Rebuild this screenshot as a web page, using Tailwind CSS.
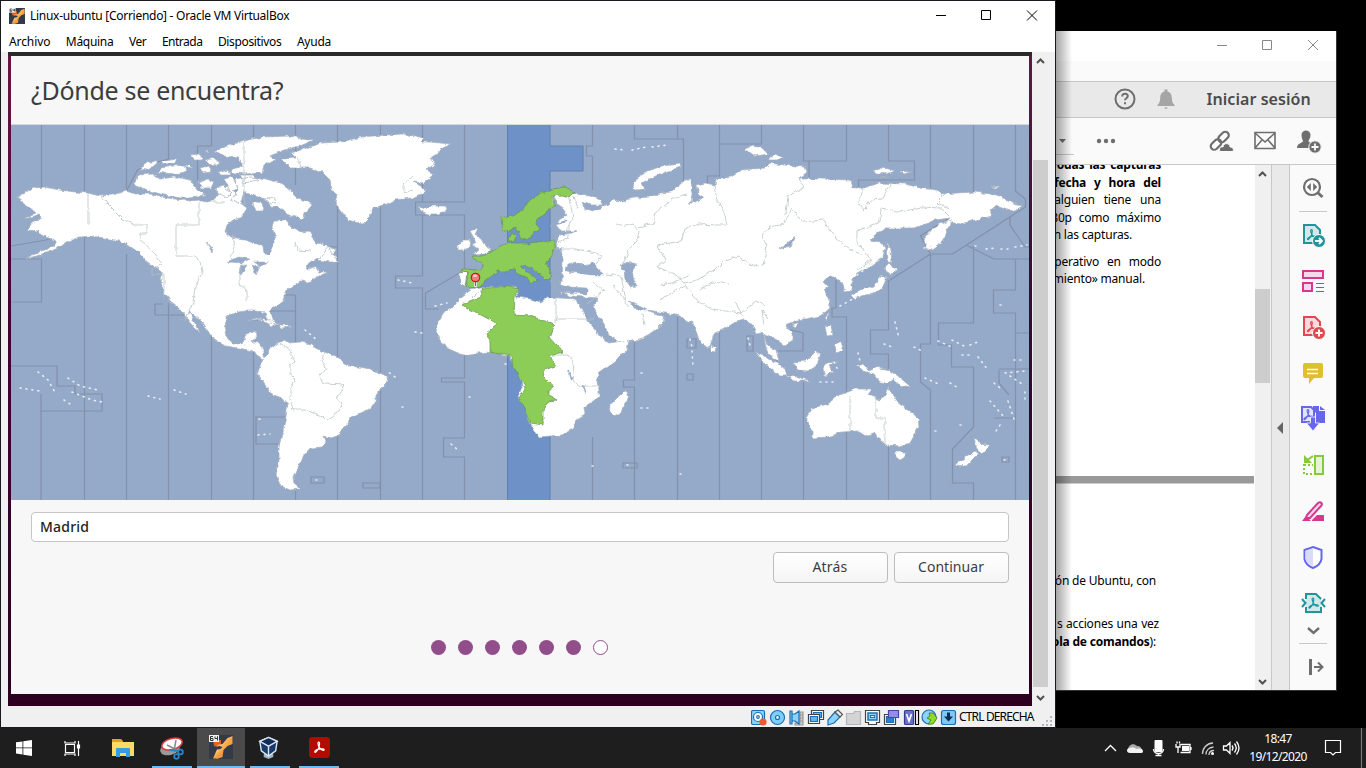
<!DOCTYPE html>
<html lang="es">
<head>
<meta charset="utf-8">
<title>Linux-ubuntu</title>
<script src="https://cdn.jsdelivr.net/npm/@tailwindcss/browser@4"></script>
</head>
<body class="relative h-[768px] w-[1366px] overflow-hidden bg-black font-['Noto_Sans',sans-serif] text-[12px] text-black">
<svg width="0" height="0" class="absolute">
  <defs>
    <g id="pdf" fill="none" stroke-width="1.2" stroke-linecap="round"><path d="M10 6c-1.500 0-.7 3 .2 4.700 1.300 2.500 4 4.200 5 3.300.9-1.200-2.500-1.800-5.200-1.100-2 .5-4.700 1.800-4 3 .8 1 3-2 4-4.400C10.800 9 11.200 6 10 6z"/></g>
    <linearGradient id="g64" x1="0" y1="0" x2="1" y2="1"><stop offset="0" stop-color="#fff0b0"/><stop offset=".5" stop-color="#f9a94a"/><stop offset="1" stop-color="#e8702a"/></linearGradient>
    <symbol id="vm" viewBox="0 0 24 24"><path fill="#333a48" d="M0 0h24v24H0z"/><path fill="#e8601c" d="M4 5h8v4l-3 3-4-1z"/><path fill="url(#g64)" d="M23.500 1v8l-5 2-4 4-1 7-6 2 2-8 4-4-6-2 6-1 5-6z"/><path fill="url(#g64)" d="M14 14l-1 6-5 3.500H4l4-9z"/><path fill="#eee" d="M0 0h10v7H0z"/><path d="M4 1.500H1.500v4h2.500v-2H1.500M6 1.500v2h2.500v-2 4" fill="none" stroke="#333" stroke-width="1"/></symbol>
  </defs>
</svg>

<!-- PDF reader window -->
<div class="absolute left-[1056px] top-[31px] flex h-[660px] w-[281px] flex-col overflow-hidden border-r border-b border-[#333] bg-white">
  <div class="flex h-[30px] shrink-0 items-center justify-end">
    <svg class="h-[30px] w-[140px]" viewBox="1196 31 140 30" fill="none" stroke="#888"><path d="M1217 45.500h10M1262.500 40.500h9v9h-9zM1308 40l10 10M1318 40l-10 10"/></svg>
  </div>
  <div class="h-[20px] shrink-0 bg-[#fafafa]"></div>
  <div class="flex h-[37px] shrink-0 items-center border-y border-[#c8c8c8] bg-[#e9e9e9] pb-[2px] pl-[57px]">
    <svg class="-ml-[.5px] size-6" viewBox="0 0 24 24" fill="none" stroke="#6e6e6e" stroke-width="2"><circle cx="12" cy="12" r="9.500"/><path d="M9.200 9.500c0-4 5.600-3.500 5.600-.4 0 2-2.800 2.200-2.800 4.200M12 15.300v2"/></svg>
    <svg class="ml-[17px] size-6" viewBox="0 0 24 24" fill="#a5a5a5"><path d="M10.500 2.500h3v2c3 .8 4.300 3 4.300 6 0 4 1 6 2.700 7.500v1h-17v-1c1.700-1.500 2.700-3.500 2.700-7.500 0-3 1.300-5.200 4.300-6zM10 20.500h4l-2 1.800z"/></svg>
    <span class="ml-[29px] whitespace-nowrap text-[16px] font-semibold tracking-[0.06px] text-[#4b4b4b]">Iniciar sesión</span>
  </div>
  <div class="h-[47px] shrink-0 border-b border-[#c8c8c8] bg-[#fafafa]">
    <svg class="h-[46px] w-[280px]" viewBox="1056 118 280 46" fill="#6e6e6e"><path d="M1059 139h7l-3.500 4z"/><path fill="#c8c8c8" d="M1056 154h18v1h-18z"/><circle cx="1099" cy="141" r="2.200"/><circle cx="1106" cy="141" r="2.200"/><circle cx="1113" cy="141" r="2.200"/>
    <g fill="none" stroke="#6e6e6e" stroke-width="2.200"><rect x="-6" y="-3.500" width="12" height="7" rx="3.500" transform="translate(1223.500 137) rotate(-45)"/><rect x="-6" y="-3.500" width="12" height="7" rx="3.500" transform="translate(1216 144.500) rotate(-45)"/></g>
    <path stroke="#fafafa" d="M1220 151.500c-1.500-4 1-5 3-4.500 1-5 7-4 7 0 3 0 4 2.500 3 4.500z"/>
    <path fill="none" stroke="#6e6e6e" stroke-width="1.600" d="M1255 132.500h20v16h-20zM1255 133l10 9 10-9M1255 148l7-8M1275 148l-7-8"/>
    <path d="M1301.500 135c0-6 9-6 9 0 0 3-1.500 4-2 6 0 2 6 2 6 7h-17.500c0-5 6-5 6-7-.500-2-1.500-3-1.500-6z"/><circle cx="1315" cy="147" r="6.200" stroke="#fafafa"/><path stroke="#fafafa" stroke-width="1.800" d="M1311.500 147h7M1315 143.500v7"/></svg>
  </div>
  <div class="flex min-h-0 grow">
    <div class="relative flex w-[199px] shrink-0 flex-col overflow-hidden bg-white">
      <div class="-mt-[9px] flex w-[105px] flex-col items-end whitespace-nowrap leading-[17.500px] tracking-[-0.2px]">
        <b class="[word-spacing:2px]">odas las capturas</b>
        <b class="[word-spacing:5px]">fecha y hora del</b>
        <span class="[word-spacing:6px]">alguien tiene una</span>
        <span class="[word-spacing:4px]">80p como máximo</span>
        <span class="mr-[29px]">n las capturas.</span>
        <span class="mt-[9px] [word-spacing:5px]">perativo en modo</span>
        <span class="mr-[16px]">miento» manual.</span>
      </div>
      <div class="mt-[188px] mr-px h-[8px] shrink-0 border-b border-[#ccc] bg-[#999]"></div>
      <div class="mt-[88px] flex w-[105px] flex-col items-end whitespace-nowrap leading-[17.500px] tracking-[-0.2px]">
        <span class="mr-[5px]">ón de Ubuntu, con</span>
        <span class="mt-[26px] mr-[2px] [word-spacing:.7px]">s acciones una vez</span>
        <span class="mr-[5px]"><b>ola de comandos</b>):</span>
      </div>
    </div>
    <div class="flex w-[17px] shrink-0 flex-col items-center border-r border-[#c8c8c8] bg-[#f0f0f0]">
      <svg class="h-[18px] w-4 shrink-0" viewBox="0 0 16 18" fill="none" stroke="#505050" stroke-width="2"><path d="M4 11l3.500-3.500 3.500 3.500"/></svg>
      <div class="mt-[106px] mr-px h-[94px] w-[15px] bg-[#cdcdcd]"></div>
      <svg class="mt-auto h-[18px] w-4 shrink-0" viewBox="0 0 16 18" fill="none" stroke="#505050" stroke-width="2"><path d="M4 8l3.500 3.500L11 8"/></svg>
    </div>
    <div class="flex w-[18px] shrink-0 items-center border-r border-[#c8c8c8] bg-[#e9e9e9]"><svg class="ml-1 h-3 w-2" viewBox="0 0 8 12" fill="#666"><path d="M7 0v12L1 6z"/></svg></div>
    <svg class="h-[525px] w-[46px] shrink-0 bg-[#fafafa]" viewBox="1290 165 46 525" fill="none">
      <g stroke="#6e6e6e" stroke-width="2.200"><circle cx="1312" cy="187" r="8"/><path stroke-width="3" d="M1317.500 192.500l5 4.500"/><path fill="#6e6e6e" stroke="none" d="M1310.800 183v8l-4-4zM1313.200 183v8l4-4z"/></g>
      <path stroke="#c8c8c8" d="M1299 211.500h28M1299 643.500h28"/>
      <g stroke="#1f959b" stroke-width="2"><path fill="#d2e9ea" d="M1304 225h11l5 5v13h-16z"/><use href="#pdf" x="1301.500" y="223.500"/><circle cx="1319" cy="241" r="6.500" fill="#1f959b" stroke="#fafafa" stroke-width="1"/><path stroke="#fff" stroke-width="1.800" d="M1315 241h7M1319 238l3 3-3 3"/></g>
      <g stroke="#d83790" stroke-width="2"><path fill="#f7d7e9" d="M1303 271h20v7h-20zM1303 283h9v8h-9z"/><path stroke-width="1.200" d="M1316 283.500h8M1316 287.500h8M1316 291.500h8"/></g>
      <g stroke="#e34850" stroke-width="2"><path fill="#fadadc" d="M1304 317h11l5 5v13h-16z"/><use href="#pdf" x="1301.500" y="315.500"/><circle cx="1319" cy="333" r="6.500" fill="#e34850" stroke="#fafafa" stroke-width="1"/><path stroke="#fff" d="M1315.500 333h7M1319 329.500v7"/></g>
      <path fill="#dfbf2b" d="M1305 363h16q2 0 2 2v11q0 2-2 2h-7l-5 6v-6h-4q-2 0-2-2v-11q0-2 2-2z"/><path stroke="#fff" stroke-width="1.500" d="M1307 369.500h11M1307 373.500h11"/>
      <g stroke="#6767ec" stroke-width="2"><path fill="#e3e3fa" d="M1302 422v-15h9l3 3v12z"/><use href="#pdf" x="1298" y="403.500" /><path fill="#6767ec" stroke="none" d="M1313 406h6v5h6v12h-9v-10l-3-3z"/><path fill="#6767ec" stroke="none" d="M1320 406l5 4h-5z"/><path fill="#6767ec" stroke="#fafafa" stroke-width=".8" d="M1310.500 417h5v6h4l-6.500 8-6.500-8h4z"/></g>
      <g stroke="#84ca3a" stroke-width="2"><path fill="#e4f4d5" d="M1315 456h8v18h-8z"/><path stroke-dasharray="2 2" d="M1304 464v10h10M1304 465h9"/><path d="M1313 456l-7 5"/><path fill="#84ca3a" stroke="none" d="M1304 455v8h8z"/></g>
      <g stroke="#d83790" stroke-width="2"><path fill="#f7d7e9" d="M1307 515l11-12c3-2 5 1 3 3l-11 12h-4z"/><path fill="#d83790" stroke="none" d="M1302 521l4-5 5 5zM1312 520l5-5h6q1 0 1 1v5h-12z"/></g>
      <path fill="#fff" stroke="#6767ec" stroke-width="2" d="M1313 547l8.500 3v9q-1 6-8.500 9-7.500-3-8.500-9v-9z"/><path fill="#dadafa" d="M1313 548.500l-7.500 2.500v8q1 5 7.500 7.500z"/>
      <g stroke="#1f959b" stroke-width="2"><path fill="#d2e9ea" stroke="none" d="M1306 594h10l5 5v13h-15z"/><path d="M1306 599v-5h10l5 5M1306 607v5h15v-5"/><path d="M1302 599l3.500 4-3.500 4M1325 599l-3.500 4 3.500 4"/><use href="#pdf" x="1303" y="592"/></g>
      <path stroke="#6e6e6e" stroke-width="2.400" d="M1308 628l5.500 5 5.500-5"/>
      <path stroke="#6e6e6e" stroke-width="3" d="M1310.500 659v16"/><path stroke="#6e6e6e" stroke-width="2" d="M1314 667h8M1318 662.500l4.500 4.500-4.500 4.500"/>
    </svg>
  </div>
  <div class="absolute inset-y-0 left-0 w-[16px] bg-linear-to-r from-black/35 to-transparent"></div>
</div>

<!-- Virtual machine window -->
<div class="absolute left-0 top-0 flex h-[728px] w-[1056px] flex-col border border-[#1c1820] bg-[#f0f0f0]">
  <div class="flex h-[30px] shrink-0 items-center bg-white pl-2">
    <svg class="size-4"><use href="#vm"/></svg>
    <span class="ml-[5px] whitespace-nowrap text-[12px] tracking-[-0.28px]">Linux-ubuntu [Corriendo] - Oracle VM VirtualBox</span>
    <svg class="ml-auto h-[30px] w-[138px]" viewBox="917 1 138 30" fill="none" stroke="#000"><path d="M936 15.500h10M981.500 10.500h9v9h-9zM1027 10.500l10 10M1037 10.500l-10 10"/></svg>
  </div>
  <div class="flex h-[21px] shrink-0 items-center gap-[15.500px] bg-white pl-2 pt-px tracking-[-0.38px]">
    <span class="tracking-[-0.1px]">Archivo</span><span class="tracking-[-0.3px]">Máquina</span><span>Ver</span><span class="tracking-[-0.5px]">Entrada</span><span class="tracking-[-0.34px]">Dispositivos</span><span class="tracking-[-0.25px]">Ayuda</span>
  </div>
  <div class="flex h-[654px] shrink-0 pl-[7px]">
    <div class="flex w-[1024px] shrink-0 flex-col bg-linear-to-b from-[#651642] via-[#3d0635] via-40% to-[#2c001e] px-[3px]">
      <div class="-mx-[3px] h-[4px] shrink-0 bg-[#2b2b2b]"></div>
      <div class="flex h-[69px] shrink-0 items-center border-b border-[#d8d8d8] bg-[#f7f7f7] pl-5 pt-[2px]">
        <h1 class="whitespace-nowrap text-[25px] tracking-[-0.31px] text-[#3d3d3d]">¿Dónde se encuentra?</h1>
      </div>
      <svg class="h-[375px] w-[1018px] shrink-0 bg-[#95a9c9]" viewBox="11 125 1018 375" fill="none">
        <defs>
          <filter id="coast" filterUnits="userSpaceOnUse" x="0" y="120" width="1040" height="385" color-interpolation-filters="sRGB"><feTurbulence type="fractalNoise" baseFrequency=".16" numOctaves="3" seed="4"/><feDisplacementMap in="SourceGraphic" scale="4.500" xChannelSelector="R" yChannelSelector="G"/></filter>
        </defs>
        <!-- selected zone -->
        <path fill="#6e92c7" stroke="#5f7eb1" d="M507.500 120h42.500v26h33v25h-33v340h-42.500z"/>
        <path fill="#6e92c7" d="M470 288l28-18 52-4v30l-10 5-30-13z"/>
        <!-- zone limits -->
        <g stroke="#8391aa" stroke-width="1.200">
          <path d="M41.500 125v62M84.500 125v67M84.500 226v274M126.500 125v66M126.500 254v246M168.500 125v34l-18 5-13 6-11 21M168.500 303v197M211.500 125v21h-14v34M211.500 330v170M253.500 125v17M295.500 125v60M295.500 295v47M337.500 125v375M380.500 125v375M422.500 125v77h-7v13h7v61h-27v12h27v212M464.500 125v77h-42M422.500 215h42v55l-39 23v16h13M464.500 355v23h-23v4h23v56h-21v19h21v43M253.500 342v158M295.500 491v9M337.500 262v-15h-17"/>
          <path d="M592.500 125v21h-6v10h6v34M634.500 125v14h49v44l-14 16M677.500 125v14M719.500 125v51h-12v7M719.500 144h42v-19M803.500 125v36h43v-36M809 161v16M888.500 125v36h26v19h-56v14M930.500 125v63M973.500 125v67M1015.500 125v66l10 8v8l-59 38-14 9h-22l-10-18 27-17M1010 217v8l15 22h4M930.500 254l-42 27v49h-18v24h18v21M966 245l28 14h35M930.500 254v90h-10v38l10 8v110M973.500 246v77h-35v22h13v22h22v60l-21 22v34h21v17M1015.500 259v31h-22v23h22v187M1015.500 333h13M836 280v28h-4v9h15M846.500 317v183M592.500 437v63M634.500 320v60h-11v7h11v113M677.500 315v185M719.500 330v170M761.500 362v138M791 330l12 3v18h-26v11M803.500 382v118M888.500 446v54M41.500 302v-43h-30M41.500 302h-30M11 246l35-6 40-14M185 315h-30v-11h8M295 417h-39v27h22M363 483h17v5h-17zM311 477h13v6h-13zM623 463h14v5h-14zM687 339h9v9h-9zM747 336h6v15h-6zM687 374h6v6h-6zM999 369h30M999 370v13l10 12M994 418h22M1002 457h7v5h-7z"/>
          <path d="M11 366h46v20h18v8h27v17h-61M41 394v50M41 444v56M254 320h14v-9h28M270 295h25"/>
        </g>
        <g filter="url(#coast)" stroke-linejoin="round">
          <g fill="#fff" stroke="#a7b2bd" stroke-width=".7">
            <!-- North and Central America -->
            <path d="M17 197l10-5 8-4 9-1 16 3 15 2 13 1 12 3 12-1 14-4 9 3 15 0 10 3 15 2 15 2 8-1 7 3 9-3 6-7 9-9 6 8 4 10 8 6-5 9-9 3-6 5-2 7 6 5 12 2 10 4 10 3 1 8 5 0 2-8 5-6-1-5-3-8 2-7 12 0 7 8 8 4 8-1 3 6 5 6 10 2 8 4-3 7-9 1-10 3-8 6 4 3 7-3 3 6 9 0-11 5-8 5-9-1-7 5-8 6 0 7-9 7-7 5 4 7 2 7-4 3-4-7-1-9-11-1-10 0-11 2-8 5-1 9 2 9 6 8 9 0 4-10 10-3 1 6-5 4 5 2 6 4 0 9 8 4 7-2 5 4-3 3-10-1-10-7-9-6-12-3-14-2-12-8-4-7-6-8-5-5-9-6 8 15 3 6-6-5-7-11-5-6-10-8-8-10-3-10 1-10-5-5-11-5-7-10-12-9-12-4-12-2-11-2-12 1-12 5-10 6-12 5-13 4-7 1 14-6 14-6 3-5-14-5-4-5-12-1 5-7 10-4-4-4-14 4 6-4 6-2z"/>
            <!-- Arctic islands -->
            <path d="M214 152l10-5 23-7 15-3 28-1 24 4-14 6-16 4-14 6 5 4-11 5-2 8-17 1-17-2 15-7-4-7-15-2zM235 180l14-3 13 1 18 5 12 9 6 6 15 6-7 8-3 7-8-2-9-3-8-7-7-1-6-7-10-3-11-4-4 12-9-4 7-10zM133 185l6-10 13-1 8 5 15-2 15 3 8 10 9 5-26 3-17-3-14-4zM139 169l8-6 12-3-4 5-7 5zM157 172l4-4 12-2 10-1 5 6-13 3-11-1zM161 161l16-3-2 5-11 1zM190 155l9-1 5 6-10 0zM200 168l9-2 3 6-10 1zM198 182l9-3 7 3-3 6-9 0zM216 188l7-2 9 6-5 5-10-4zM218 172l10-3 3 6-9 0zM224 179l8-2 6 10-6 6zM239 175h13l6 5-14 3zM206 160l8-2 6 5-9 2zM183 166l6-2 4 4zM203 151l5 0 1 2zM252 201l10 2 2 8-8 0zM266 199l7-2 3 4-6 2z"/>
            <!-- Greenland, Iceland, Newfoundland -->
            <path d="M281 159l15-1-5-5 16-5 14-5 20-1 20-5 25-2 16-1 14 2 8 3-3 3 9 0 10 1 11 1-10 4-4 6-7 4 5 7-9 5 8 5-10 8-11-1 9 4 3 6-13 6-17 2-8 4-14 4-3 8-8 8-7-2-7-2-8-11-5-6 2-8-5-5-2-10-8-8-12-4-20 0zM418 206l7 3 7-3 13 0 2 4-9 4-10 0-7-3zM318 260l7-8 3-7 4 9 5 3 1 5-8 0zM247 322l10-4 14 2 9 4-10-1-12-4zM279 325l9 0 4 2-11 1z"/>
            <!-- South America -->
            <path d="M269 349l8-6 8-3 5 3 10-1 12 2 8 7 11 3 8 4 5 6 6 2 16 2 12 4 8 4 2 5-5 6-6 5-2 10-5 7-7 3-13 5-2 8-7 6-4 5-5 2-9-2 3 7-4 4-11 1-4 5-4 2-3 9-4 6-3 7 1 7 6 5-10 1-9-4-5-10 3-15 0-15 4-15 3-15 2-13-6-5-11-4-8-13-6-6 2-6 4-10 5-5z"/>
            <!-- British Isles, Svalbard, Novaya Zemlya, Franz Josef -->
            <path d="M470 231l8-3-3 7 6 4 4 7 6 4-4 3-15 1 6-5-6-4 4-3zM458 246l5-6 8 0-1 6-6 4-6 0zM632 189l5-11 11-7 14-5 18-2 1 3-16 5-14 6-9 5 3 6-9 1zM745 149l9-4 8 3 6 6-13 2zM768 160l7-6 9 4-7 2zM873 171l6-3 10 1 6 2-8 3-10-1zM900 171l12 1-8 2zM880 177l9 1zM991 187l9-1-3 2z"/>
            <!-- Eurasia -->
            <path d="M554 197l6-4 15 1 15 1 12 6 0 4-12 0-7-3 3 7 6 2 8-3 8-4 4-4 10 1 12-3 16-1 10-4 12-1 4-4 9-8 5 0 2 10 1 10 5-8-1-7 8-2 10 2 1-6 15-3 10-6 24-2 5-5 15 2 20 2 2 5-8 7 21 0 30 1 2 7 8 2 20-6 25 1 15 4 17 2 3 4 35-2 15 2 17 6 6 4 9 2-7 5-8-1-10-4-7 4 2 6-17 4-15 4-12-2-3 11-10 13-5 4-4-8 2-10 12-7 10-7-15 2-10 4-10 4-30 0-15 12 10 2 5 6-2 9-13 10-13 7-5 5 0 11-7 2-2-9-5-4-8-3-8 6 8 3-6 5 6 10-2 10-8 6-15 3-8 1-12 5 8 10 0 6-8 5-8-6-9-4-4-2 3 11 9 5 3 11-7-3-6-10-2-12-3-4-4 1-7-10-6-4-7 2-11 7-12 6-4 12-4 2-7-9-5-13-2-5-6 1-6-6-15-3-18-3-8-4-10-5 8 9 12 1 12 4 4 6-9 9-10 7-14 4-13 4-9-10-10-16-7-12 5-9-14-1-15-1-6-5-2 4-4-7 5-6 1-22-2-12-6-1 3-7 3-5 10-2 6-2-17 0-4-5 3-6 8-5-4-5z"/>
            <path d="M460 273l7-1-2 13-5-1z"/>
            <path d="M952 220l-12 4-10 8-6 7 2 9 2 3 5-3 9-6 5-8-1-6 6-4z"/>
            <!-- Africa and Madagascar -->
            <path d="M470 290l10-2 15-1 21-1 2 7-2 4 14 2 11 3 6-5 13 1 16 1 3 6 6 12 10 13 9 10 5 3 20-3-2 10-13 12-15 10-3 10 3 8 0 7-10 7-5 3 1 8-8 5-6 10-9 5-23 2-5-7-5-10-3-12-8-11 4-10-1-10-7-10-4-11-6 0-6-4-8 0-12 1-15 2-12-5-10-8-5-10 2-10 6-10 10-7 6-8zM610 405l8-8 7-7 3 5-6 18-8 4-5-5z"/>
            <!-- Australia and islands -->
            <path d="M807 416l5-8 16-4 10-9 8-2 9-4 17 0-4 6 12 5 6-4 2-9 5 9 5 7 12 8 8 7 1 9-9 16-10 3-14-1-6-5-4-7-8 3-10-5-16 1-14 5-16 1 0-8-5-10zM894 452l12 0-3 6-5 1zM857 366l7-2 5 6 6-3 15 3 8 6 7 6 6 5-11-2-7-6-6 4-7-1-6-8-10-3zM794 362l12-1 9-9 5 4-5 11-7 4-10-1zM755 352l9 3 9 6 12 8 2 7-7 0-10-8-9-8zM785 376l14 1 11 4-16 0zM823 368l4-5 11-1-9 4 5 7-4-1-3 4-3-2zM825 327l6-1 2 9-6 1zM834 345l7-4 2 9-6 2zM852 295l8-5 14-3 7-12 6 2-5 12-10 5-12 2-5 4zM885 268l4-4 8 6-8 5zM887 242l4 8 1 14-4-2zM974 438l7 6 9 1-8 9-5-4zM956 465l9-8 10-6 4 3-13 12zM711 345l5 3-1 5-5-1zM825 317l4-5-2 9zM792 325l7-3-3 5z"/>
          </g>
          <!-- inland waters -->
          <g fill="#95a9c9" stroke="#a7b2bd" stroke-width=".5">
            <path d="M565 272l3-8 8-2 9 4 7-5 6 7 6 7-14 0-12-2zM620 266l8-5 8 3-4 6 2 10 3 6-7 1-5-7-1-8zM551 280l5-2 6 6 9 3 16 1 0 6-30-2zM693 200l-2-10 4-6 3 10 5 3-6 4-8 3zM780 249l15-12-4 9zM228 262l10-5 12 2-8 4zM239 273l2-9 6 2-6 9zM252 264l8 3-4 8zM206 242l7 8-1 2zM254 262l14 0-8 4z"/>
            <path d="M567 221l-17 5" stroke="#95a9c9" stroke-width="2"/>
            <path d="M568 370l3 10M582 385l3 8" stroke="#95a9c9" stroke-width="1.500"/>
          </g>
          <!-- highlighted countries -->
          <g fill="#8ccd58" stroke="#68904f" stroke-width=".7">
            <path d="M501 218L513 215 522 210 530 200 541 193 553 189 564 187 575 192 570 197 562 195 553 196 554 203 556 206 548 210 545 214 537 219 536 224 540 229 533 234 530 238 522 239 516 227 508 232 502 228zM508 241l4-8 4 2-2 6zM473 258L474 256 483 256 494 250 499 246 505 244 512 243 530 243 545 241 554 241 554 248 553 254 549 260 546 263 551 271 550 278 544 280 540 274 531 268 525 264 521 266 526 271 534 276 539 280 534 281 531 284 528 279 518 274 514 269 505 271 497 271 492 276 485 281 480 287 470 288 466 284 468 273 461 272 462 269 481 270 483 263z"/>
            <path d="M462 305l20-8-1-8 29-3 8 2-3 9-1 18 16 1 24 8-5 13 7 8 8 7-14 3 5 11-10 4-2 7 11 9-5 4 0 6 8 4-9 1-5 10 0 14-12-2-6-15-6-10 6-10-3-8-9-13-1-11-7-1-15-3 0-10-4-9 12-9z"/>
          </g>
          <!-- borders -->
          <g stroke="#b9c4c3" stroke-width=".8">
            <path d="M88 193v32M101 195l6 9 15 15 14 6h11v8h-7v6l13 12 9 13-9 4v6h11v24M225 202h-26v23h-23v31h17l7 5 2 12-7 14-2 16-8 18M244 139v65M232 235l2 12-4 10M240 267v16l7 8v10M295 242l2 8 14 1M280 343l9 6 6 13-5 3 0 10 5 5-5 10 0 8 3 12 12 0 17 6 5 5 8-6 7-12-6-5 8-13-20-1-4-9 6-7-4-8 2-8M302 170l-5-14M413 190l-9 3 0-8 8-9"/>
            <path d="M554 197l-2 7M568 195l3 12 2 10-5 10 0 10-10 6M553 249l23 0 20 4 6 3-6 8M574 197l4 12M617 224l8 2 8-2 6 7-2 10-8 8-6 15 8-2M672 200l-18 14v9l-16 4M670 199l16-5M714 185l3 15 8 15 2 10-10 0-18-1-14 5-4 12-23 4 7 15-8 7 18 7 10 9 12-3 18-10 10-10 14-4 10 8 14 3 4-22-5-9 8-9 14-3 8-16 10 14 22-2 10 16 16 14 12 4M799 178l4 10-15 8-2 18M890 184l-8 15-12 1-6 10-6-9 6-12M881 208l20 4 20-5 20 1 8 8M881 208l-1 14-23 9 0 11 8 10 6 8-14 11M946 193l-10 10 14 5M700 290l12-8 18 2M661 285l10-2 20-8M660 300l25-15 12 15 14 9 30 4 15-12 10 5M735 302l8 14M768 319l-6-9 2 15M593 282l10 8-16 15M606 274l15 2 6 30M556 297v22h38M556 319v5M550 355l18 0 6 10-2 15 8 6h20M480 290l-8 8M850 396v36M876 396v22h9v26M625 300l-12-15M644 325l-2-12"/>
          </g>
        </g>
        <!-- small islands -->
        <g stroke="#e7eef5" stroke-width="1.600" stroke-linecap="round" stroke-dasharray="1 5">
          <path d="M690 339l2 8M692 351l1 15M748 338l3 11M895 322l4 16M858 353l2 8M884 344l8 3M914 347l8 4M938 341l14 6M952 340l16 8M962 355l8 0M978 357l10 13M1005 373l20-2M994 383l6 5M990 401l14 16M1008 401l6 18M1000 425l-4 6M1010 376l12 8M1025 392v12M950 383l10 6M925 378l16 7M975 246l5 0M986 249l10-1M1001 249l8 0M1015 247l12-2M1000 305h5M970 345l10-4M398 280l10 2 7 2M415 332l7 1M435 306l12-3M395 377l-8-6M402 407h3M259 419l4 1M258 435l12-1M38 372l10 8 8 14M68 378l12 8 18 4M72 392l20 8 10 2M20 388l20 3M148 396l12 3M174 390l12 4M64 400l6 4M615 149l10 1M632 150l14-3M652 147l16-2M262 312l12 12M305 330l12 10M316 480h6M627 465h5M592 466h2M469 397h2M641 373h2M641 408h8M935 431h2M960 425h2M1004 460h3M680 474h4M451 444l8 7M1014 360h10M244 345h1M505 364h1M834 362l4 8M820 382h18M924 248l8-2M840 306l18-10M857 275l25-18"/>
        </g>
        <!-- city pin -->
        <path stroke="#eee" stroke-width="2.600" d="M475.500 281v6"/><path stroke="#8a3030" stroke-width=".8" d="M475.500 281v5"/>
        <circle cx="475.500" cy="277.500" r="4.200" fill="#f47c7c" stroke="#c31c1c" stroke-width="1.200"/><ellipse cx="475" cy="275.800" rx="2.200" ry="1.300" fill="#fcc"/>
      </svg>
      <div class="flex h-[194px] shrink-0 flex-col bg-[#f7f7f7] px-5 pt-3">
        <div class="flex h-[30px] shrink-0 items-center rounded-[4px] border border-[#c6c6c6] bg-white pb-px pl-2 text-[14px] font-medium tracking-[0.2px] text-[#1e1e1e]">Madrid</div>
        <div class="mt-[10px] flex justify-end gap-[6px] text-[14px] text-[#3d3d3d]">
          <div class="flex h-[31px] w-[115px] items-center justify-center rounded-[4px] border border-[#bdbdbd] bg-linear-to-b from-white to-[#f5f5f5] pb-[2px] pr-px tracking-[0.2px]">Atrás</div>
          <div class="flex h-[31px] w-[115px] items-center justify-center rounded-[4px] border border-[#bdbdbd] bg-linear-to-b from-white to-[#f5f5f5] pb-[2px] pr-px tracking-[0.05px]">Continuar</div>
        </div>
        <div class="mt-[57px] flex justify-center gap-3 pr-[2px]">
          <i class="size-[15px] rounded-full bg-[#924d8b]"></i><i class="size-[15px] rounded-full bg-[#924d8b]"></i><i class="size-[15px] rounded-full bg-[#924d8b]"></i><i class="size-[15px] rounded-full bg-[#924d8b]"></i><i class="size-[15px] rounded-full bg-[#924d8b]"></i><i class="size-[15px] rounded-full bg-[#924d8b]"></i><i class="size-[15px] rounded-full border border-[#924d8b] bg-white"></i>
        </div>
      </div>
    </div>
    <div class="ml-px flex w-[16px] flex-col">
      <svg class="h-[18px] w-4 shrink-0" viewBox="0 0 16 18" fill="none" stroke="#505050" stroke-width="2"><path d="M4 11l3.500-3.500L11 11"/></svg>
      <div class="mt-[90px] h-[527px] w-[15px] bg-[#cdcdcd]"></div>
      <svg class="h-[19px] w-4 shrink-0" viewBox="0 0 16 19" fill="none" stroke="#505050" stroke-width="2"><path d="M4 9l3.500 3.500L11 9"/></svg>
    </div>
  </div>
  <div class="flex h-[21px] items-center pl-[750px]">
    <svg class="h-[20px] w-[206px] shrink-0" viewBox="751 706 206 20" fill="none" stroke="#1a6fb5" stroke-width="1.200">
      <rect x="751.500" y="709.500" width="13" height="14" rx="1.500" fill="#8bd3fb"/><circle cx="758" cy="716" r="4.500" fill="#fff"/><circle cx="758" cy="716" r="1.300"/><circle cx="763" cy="721" r="3.600" fill="#ee5a32" stroke="none"/>
      <circle cx="777.500" cy="716.500" r="7" fill="#7cd0fb"/><circle cx="777.500" cy="716.500" r="2" fill="#e7f6ff"/>
      <path stroke="#999" fill="#ccc" d="M800 711h3v13h-8v-2h5zM800 714h3M800 717h3M800 720h3"/><path fill="#8bd3fb" d="M790 710h2v13h-2zM792 713h3l4-3v13l-4-3h-3z"/>
      <path stroke="#444" fill="#fff" d="M811.500 709.500h12v9h-12z"/><path fill="#58b8f5" d="M813.500 711.500h8v5h-8z"/><path stroke="#444" fill="#fff" d="M808.500 713.500h11v9h-11z"/><path fill="#58b8f5" d="M810.500 715.500h7v5h-7z"/>
      <path fill="#8bd3fb" d="M828 724v-5l7-8 5 5-6 6z"/><path stroke="#555" fill="#eee" d="M835 711l3-2 4.500 4.500-2.500 2.500z"/>
      <path stroke="#b5b5b5" fill="#d4d4d4" d="M846.500 712.500h7l1-2h6v13h-14z"/>
      <path stroke="#444" fill="#fff" d="M865.500 709.500h14v12h-3v2h-8v-2h-3z"/><path fill="#8bd3fb" stroke-width="1.500" d="M868 712h9v7h-9z"/><path fill="#fff" d="M870.500 714.500h4v2h-4z"/>
      <path stroke="#444" fill="#fff" d="M884.500 713.500h11v10h-11z"/><path fill="#2b7fd0" d="M886.500 715.500h7v6h-7z"/><path fill="#8f8fe6" stroke="#4545a5" d="M888.500 709.500h10v7h-10z"/>
      <rect x="904.500" y="709.500" width="9" height="14" rx="1" fill="#6b70c8" stroke="#353c90"/><path stroke="#fff" stroke-width="1.600" d="M906.500 713l2.500 7 2.500-7"/><path fill="#fff" stroke="#000" d="M915.500 709.500h3v14h-3z"/>
      <circle cx="929" cy="716" r="7" fill="#8bd3fb"/><path fill="#8fdc2c" stroke="#3c7b0a" stroke-width=".8" d="M929 712h4l4 5-4 6h-5l3-4-4-2 3-2z"/>
      <rect x="941.500" y="709.500" width="14" height="14" rx="2" fill="#7cc9f8"/><path stroke="#0b2e52" stroke-width="3" d="M948.500 711.500v5"/><path fill="#0b2e52" stroke="none" d="M944 715.500h9l-4.500 5z"/>
    </svg>
    <span class="ml-[2px] whitespace-nowrap pt-px tracking-[-0.85px]">CTRL DERECHA</span>
    <svg class="mt-auto ml-auto h-3 w-[13px]" viewBox="0 0 13 12" fill="#b5b5b5"><path d="M8 1h2v2H8zM8 5h2v2H8zM8 9h2v2H8zM4 5h2v2H4zM4 9h2v2H4zM0 9h2v2H0z"/></svg>
  </div>
</div>

<!-- Taskbar -->
<div class="absolute inset-x-0 bottom-0 flex h-[40px] items-stretch bg-[#1e1e1e] text-white">
  <div class="flex w-12 items-center justify-center"><svg class="size-4" viewBox="0 0 16 16" fill="#fff"><path d="M0 2.300l6.500-.9v6.100H0zM7.300 1.300L16 0v7.500H7.300zM0 8.300h6.500v6.100L0 13.500zM7.300 8.300H16V16l-8.700-1.300z"/></svg></div>
  <div class="flex w-12 items-center justify-center"><svg class="size-[17px]" viewBox="0 0 17 17" fill="none" stroke="#fff" stroke-width="1.200"><path d="M1.500 4.500h9v8h-9zM1 1v2h10V1M1 16v-2h10v2M14.500 1v15"/><path fill="#fff" d="M13.500 5h2v3h-2z"/></svg></div>
  <div class="ml-px flex w-[52px] items-center justify-center"><svg class="size-[22px]" viewBox="0 0 22 22"><path fill="#e3a21a" d="M0 2h9l2 2v3H0z"/><path fill="#ffd967" d="M0 5h22v14H0z"/><path fill="#3b9be0" d="M4 12q0-1 1-1h12q1 0 1 1v8h-4v-4H8v4H4z"/></svg></div>
  <div class="ml-[3px] flex w-[40px] items-center justify-center border-b-2 border-[#76b9ed]"><svg class="mt-px size-6" viewBox="0 0 24 24"><ellipse cx="10" cy="13" rx="10" ry="6" fill="#999" transform="rotate(-15 10 13)"/><ellipse cx="12" cy="8" rx="10.500" ry="5.500" fill="#fff" stroke="#d63a3a" stroke-width="1.500" transform="rotate(-15 12 8)"/><path stroke="#888" stroke-width="1.500" d="M16 4l-2 11M7 9l10 5"/><g fill="none" stroke="#2786c9" stroke-width="1.800"><circle cx="20.500" cy="16" r="2.300"/><circle cx="16.500" cy="20.500" r="2.300"/><path d="M10 14l8 1"/></g></svg></div>
  <div class="ml-[5px] flex w-[48px] items-center justify-center border-b-2 border-[#76b9ed] bg-[#4a4a4a]"><svg class="size-6"><use href="#vm"/></svg></div>
  <div class="ml-[5px] flex w-[40px] items-center justify-center border-b-2 border-[#76b9ed]"><svg class="-ml-[3px] size-[23px]" viewBox="0 0 24 24" stroke="#d9e5f3" stroke-width="1.500"><path fill="#9fb2c4" stroke="none" d="M7 19l5-2 5 2v3l-5 2-5-2z"/><path fill="#183b6b" d="M12 1.500l9 4-1.500 10L12 21l-7.500-5.500L3 5.500z"/><path fill="#112d55" d="M3 5.500l9 5 9-5-9-4z"/><path d="M12 10.500v10"/></svg></div>
  <div class="ml-[9px] flex w-[40px] items-center justify-center border-b-2 border-[#76b9ed]"><svg class="mt-px size-[21px]" viewBox="0 0 21 21"><rect width="21" height="21" rx="3.500" fill="#b30b00"/><g stroke="#fff" transform="translate(-.2 -.8)"><use href="#pdf"/></g></svg></div>
  <svg class="ml-auto h-[40px] w-[150px]" viewBox="1095 728 150 40" fill="none" stroke="#fff" stroke-width="1.300"><path d="M1105 751l5.500-5.500L1116 751"/><path fill="#aaa" stroke="none" d="M1128 750c0-5 5-8 9-4 3 0 5 2 5 5z"/><path fill="#f2f2f2" stroke="none" d="M1130 753c-4 0-4-5 0-5 3-2 5 0 7 1 3-1 6 0 6 2s-1 2-3 2z"/><rect x="1154.500" y="740" width="8" height="12" rx="1" fill="#fff" stroke="none"/><path d="M1153.500 749c0 6 10 6 10 0M1158.500 753v2M1155.500 755.500h6"/><path d="M1180.500 744.500h9.500v8h-9.500M1191 747v3"/><path fill="#fff" stroke="none" d="M1182 746h7v5h-7z"/><path d="M1176 744v3h4v-3M1178 747v6M1177 741.500v2M1179.500 741.500v2"/><path stroke="#ccc" d="M1202.500 754c0-6 4-10.500 10.500-11M1206 754.500c0-4 3-7 7.500-7.500M1209 755c0-3 2-4.500 5-4.500"/><circle cx="1212.500" cy="753.500" r="1.500" fill="#fff" stroke="none"/><path d="M1223.500 746h3l3.500-3.500v11l-3.500-3.500h-3zM1232 745.500q2 2.500 0 5M1234.500 743.500q3.500 4.500 0 9M1236.500 741.500q5 6.500 0 13"/></svg>
  <div class="flex w-[66px] flex-col items-center justify-center whitespace-nowrap text-[12px] leading-[18px] tracking-[-0.65px]"><span>18:47</span><span>19/12/2020</span></div>
  <svg class="ml-[12px] h-[40px] w-[43px]" viewBox="1323 728 43 40" fill="none" stroke="#fff" stroke-width="1.200"><path d="M1325.500 740.500h15v12h-5l-2.500 2.500-2.500-2.500h-5z"/><path stroke="#777" d="M1361.500 728v40"/></svg>
</div>
</body>
</html>
